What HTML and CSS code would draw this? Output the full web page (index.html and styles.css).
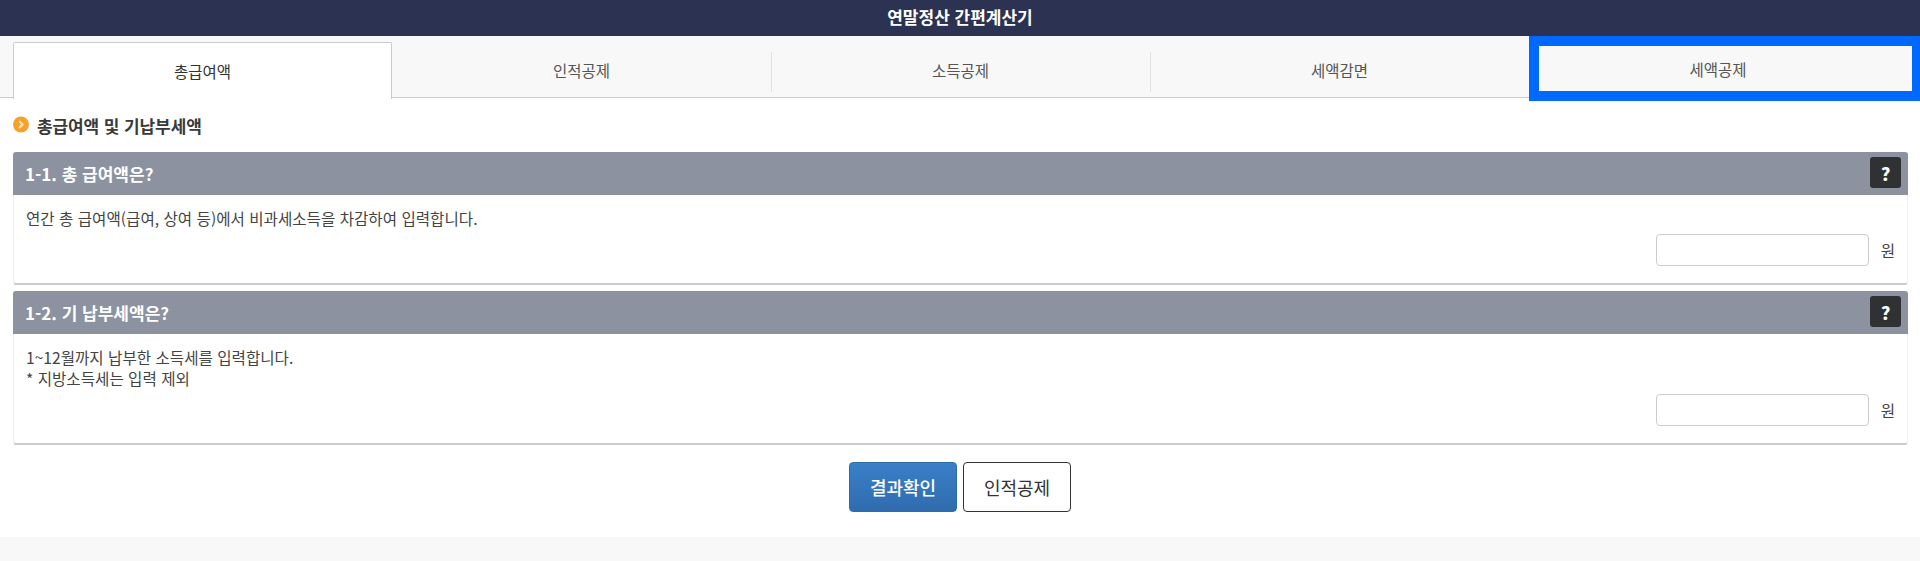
FILE: index.html
```html
<!DOCTYPE html>
<html lang="ko">
<head>
  <meta charset="UTF-8">
  <title>연말정산 간편계산기</title>
  <link rel="stylesheet" href="styles.css">
</head>
<body>
  <h1 class="top-title">연말정산 간편계산기</h1>

  <ul class="tabs">
    <li class="tab active"><a href="#">총급여액</a></li>
    <li class="tab"><a href="#">인적공제</a></li>
    <li class="tab"><a href="#">소득공제</a></li>
    <li class="tab"><a href="#">세액감면</a></li>
    <li class="tab focused"><a href="#">세액공제</a></li>
  </ul>

  <div class="content">
    <h2 class="section-title">
      <svg class="bullet" width="16" height="17" viewBox="0 0 16 17">
        <circle cx="8" cy="8.5" r="8" fill="#f6a12c"/>
        <path d="M6.2 5 9.6 8.5 6.2 12" fill="none" stroke="#fde6c4" stroke-width="2"/>
      </svg>
      총급여액 및 기납부세액
    </h2>

    <div class="panel">
      <div class="panel-head">
        <span>1-1. 총 급여액은?</span>
        <button class="help">?</button>
      </div>
      <div class="panel-body">
        <p>연간 총 급여액(급여, 상여 등)에서 비과세소득을 차감하여 입력합니다.</p>
        <div class="field"><input type="text"><span>원</span></div>
      </div>
    </div>

    <div class="panel">
      <div class="panel-head">
        <span>1-2. 기 납부세액은?</span>
        <button class="help">?</button>
      </div>
      <div class="panel-body">
        <p>1~12월까지 납부한 소득세를 입력합니다.<br>* 지방소득세는 입력 제외</p>
        <div class="field"><input type="text"><span>원</span></div>
      </div>
    </div>

    <div class="actions">
      <button class="btn btn-primary">결과확인</button>
      <button class="btn">인적공제</button>
    </div>
  </div>

  <div class="footer"></div>
</body>
</html>
```

FILE: styles.css
```css
* { box-sizing: border-box; }
html, body { height: 100%; }
body {
  margin: 0;
  overflow: hidden;
  background: #fff;
  color: #333;
  font-family: "Noto Sans CJK KR", "Noto Sans", sans-serif;
  font-size: 15.6px;
}
.top-title {
  margin: 0;
  height: 36px;
  line-height: 34px;
  background: #2b3252;
  color: #fff;
  font-size: 17px;
  font-weight: 700;
  text-align: center;
}

.tabs {
  display: flex;
  height: 62px;
  margin: 0;
  padding: 6px 0 0 13px;
  list-style: none;
  background: #f8f8f8;
  border-bottom: 1px solid #ccc;
}
.tab { width: 379px; display: flex; }
.tab a {
  flex: 1;
  display: flex;
  align-items: center;
  justify-content: center;
  color: #555;
  text-decoration: none;
  font-size: 15.5px;
}
.tab + .tab a { position: relative; }
.tab + .tab a::after {
  content: "";
  position: absolute;
  right: -1px;
  top: 10px;
  bottom: 5px;
  width: 1px;
  background: #e2e2e2;
}
.active {
  height: 57px;
  background: #fff;
  border: 1px solid #ccc;
  border-bottom: 0;
  border-radius: 2px 2px 0 0;
}
.active a { color: #333; }
.tab.focused { width: auto; flex: 1; margin-top: -6px; }
.tab.focused a {
  margin: 10px 8px 6px 10px;
  padding-right: 15px;
  outline: 10px solid #0069fd;
}
.tab.focused a::after { display: none; }

.content { padding: 0 12px 0 13px; }
.section-title {
  display: flex;
  align-items: center;
  gap: 8px;
  height: 54px;
  margin: 0;
  padding-top: 1px;
  color: #3a3a3a;
  font-size: 17px;
  font-weight: 700;
  letter-spacing: -0.1px;
}
.bullet { margin-top: -3px; }

.panel {
  margin-bottom: 6px;
  background: #fff;
  border: 1px solid #eee;
  border-top: 0;
  border-bottom: 2px solid #ccc;
  border-radius: 3px;
}
.panel-head {
  display: flex;
  justify-content: space-between;
  height: 43px;
  margin: 0 -1px;
  padding: 5px 7px 0 12px;
  background: #8c92a0;
  border-radius: 3px 3px 0 0;
  color: #fff;
  font-size: 17px;
  font-weight: 700;
  line-height: 33px;
}
.help {
  width: 31px;
  height: 31px;
  padding: 0;
  border: 0;
  border-radius: 3px;
  background: #2f3133;
  color: #fff;
  font-family: inherit;
  font-size: 18px;
  font-weight: 900;
}
.panel-body { padding: 13px 12px 17px; }
.panel-body p { margin: 0; line-height: 21px; color: #444; }
.field {
  display: flex;
  justify-content: flex-end;
  align-items: center;
  gap: 12px;
  margin-top: 5px;
}
.field input {
  width: 213px;
  height: 32px;
  border: 1px solid #ccc;
  border-radius: 4px;
  background: #fff;
}
.field span { color: #444; }

.actions {
  display: flex;
  justify-content: center;
  gap: 6px;
  margin-top: 17px;
  padding-right: 1px;
}
.btn {
  width: 108px;
  height: 50px;
  padding: 0;
  border: 1px solid #333;
  border-radius: 4px;
  background: #fff;
  color: #333;
  font-family: inherit;
  font-size: 18px;
}
.btn-primary {
  border-color: #2e6da4;
  background: linear-gradient(#3a7fc8, #2f6cae);
  color: #fff;
  font-weight: 500;
}

.footer {
  position: absolute;
  left: 0;
  right: 0;
  top: 537px;
  bottom: 0;
  background: #f8f8f8;
}
```
